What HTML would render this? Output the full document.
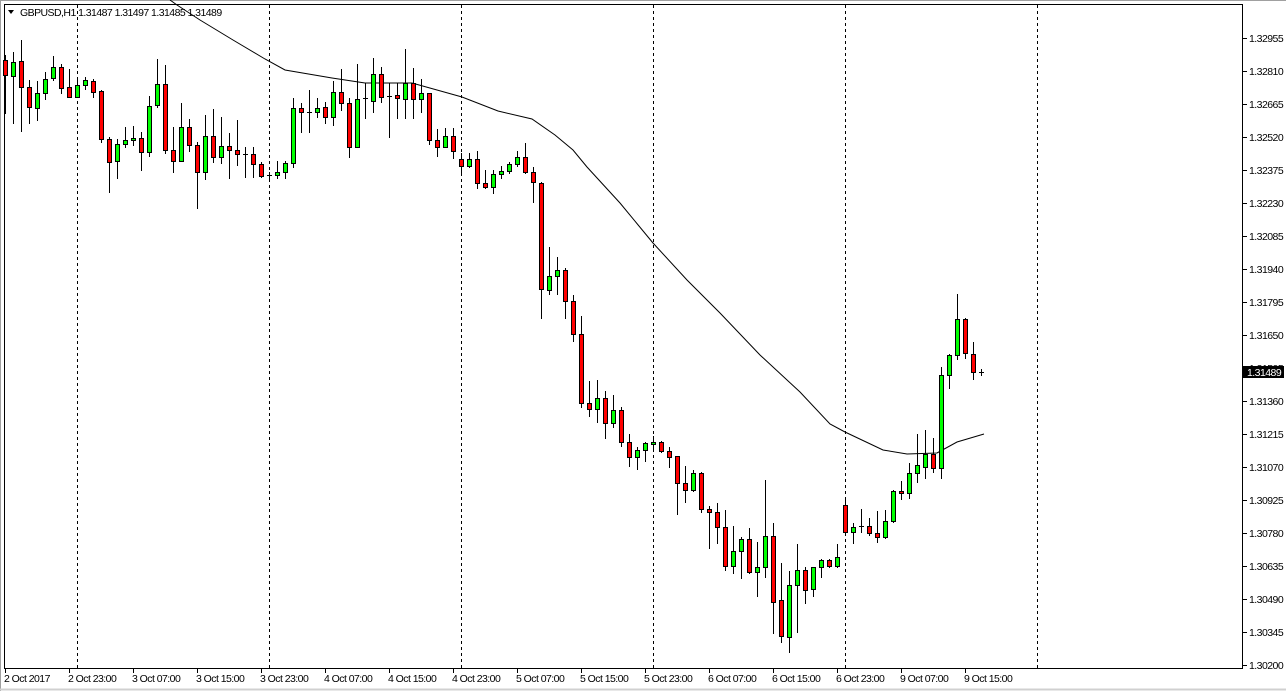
<!DOCTYPE html>
<html><head><meta charset="utf-8"><style>
html,body{margin:0;padding:0;background:#fff;width:1286px;height:691px;overflow:hidden}
svg{display:block}
text{font-family:"Liberation Sans",sans-serif;font-size:10.5px;letter-spacing:-0.55px;fill:#000}
</style></head><body>
<svg id="s" width="1286" height="691" xmlns="http://www.w3.org/2000/svg">
<rect x="0" y="0" width="1286" height="691" fill="#fff"/>
<line x1="0" y1="0.5" x2="1286" y2="0.5" stroke="#a0a0a0"/>
<line x1="0.5" y1="0" x2="0.5" y2="691" stroke="#a0a0a0"/>
<line x1="0" y1="689.5" x2="1286" y2="689.5" stroke="#d0d0d0" stroke-width="2"/>
<line x1="4.5" y1="4" x2="4.5" y2="669" stroke="#000"/>
<line x1="4" y1="4.5" x2="1243" y2="4.5" stroke="#000"/>
<line x1="1242.5" y1="4" x2="1242.5" y2="669" stroke="#000"/>
<line x1="4" y1="668.5" x2="1243" y2="668.5" stroke="#000"/>
<g id="dash"></g>
<g id="ma"></g>
<g id="c"></g>
<g id="ax"></g>
<polygon points="8,10 14,10 11,14" fill="#000"/>
<text x="20" y="16">GBPUSD,H1  1.31487 1.31497 1.31485 1.31489</text>
<rect x="1243" y="366" width="41" height="12" fill="#000"/>
<text x="1247" y="376" style="fill:#fff">1.31489</text>
</svg>
<script>
var NS="http://www.w3.org/2000/svg";
function el(p,n,a,t){var e=document.createElementNS(NS,n);for(var k in a)e.setAttribute(k,a[k]);if(t)e.textContent=t;document.getElementById(p).appendChild(e);return e;}
[77,269,461,653,845,1037].forEach(function(x){el("dash","line",{x1:x+.5,y1:5,x2:x+.5,y2:668,stroke:"#000","stroke-dasharray":"3,3"});});
var ma="M170,0 L177,5 L200,20 L233,40 L265,59 L285,70 L332,78 L365,83 L412,83 L462,97 L498,111 L532,119 L555,135 L573,150 L587,167 L620,203 L653,243 L687,280 L720,313 L760,355 L800,392 L830,424 L845,432 L883,450 L907,454 L937,453 L957,442 L984,434";
el("ma","path",{d:ma,fill:"none",stroke:"#000","stroke-width":1});
var D="60,75,55,113,r;62,76,52,123,g;61,87,40,131,r;87,107,80,123,r;93,108,81,120,g;79,93,72,99,g;67,78,56,80,g;67,88,64,93,r;87,97,69,97,r;85,97,77,97,g;80,85,77,89,g;81,92,79,97,r;91,139,90,142,r;139,162,137,192,r;144,161,139,178,g;140,144,127,147,g;138,140,126,145,g;138,152,132,170,r;106,152,96,156,g;84,105,59,107,g;84,150,65,153,r;150,161,127,172,r;127,161,103,161,g;127,145,119,151,r;145,172,142,208,r;136,172,115,179,g;136,157,109,162,r;146,157,117,163,g;146,150,133,178,r;150,154,120,165,r;154,154,147,177,d;154,164,147,177,r;164,176,162,177,r;175,175,172,178,d;172,175,161,178,g;163,172,161,178,g;108,163,98,167,g;108,112,103,132,r;112,112,90,132,d;108,112,98,117,g;107,117,102,123,r;92,117,81,125,g;92,103,69,110,r;103,147,98,157,r;99,147,64,147,g;98,102,83,118,d;74,101,58,112,g;74,97,67,102,r;96,96,83,137,d;95,98,83,118,r;83,99,49,118,g;83,99,68,118,r;93,99,79,112,g;93,140,93,144,r;140,147,129,156,r;136,147,128,147,g;136,151,128,158,r;159,166,153,174,r;159,166,153,167,g;159,183,151,188,r;183,187,170,188,r;174,187,170,193,g;171,174,166,178,g;164,171,162,173,g;157,164,151,166,g;157,172,143,173,r;172,182,167,202,r;183,289,182,318,r;276,290,247,294,g;270,276,257,294,g;270,301,268,318,r;301,334,295,341,r;334,403,316,407,r;403,409,381,416,r;398,409,380,422,g;398,423,391,438,r;410,423,395,427,g;410,442,407,446,r;442,457,434,466,r;450,457,447,469,g;443,450,442,461,g;442,444,436,449,g;442,451,441,452,r;451,457,447,467,r;456,483,456,514,r;483,490,466,502,r;473,490,470,491,g;473,509,472,512,r;509,512,506,548,r;512,527,503,543,r;527,566,510,570,r;551,566,526,573,g;539,551,537,578,g;539,572,528,573,r;567,572,542,596,g;536,567,480,577,g;536,602,523,633,r;600,636,563,642,r;585,637,571,652,g;570,585,544,632,g;570,590,567,603,r;567,589,567,596,g;560,567,559,577,g;560,566,559,567,r;557,566,544,567,g;505,532,497,534,r;527,532,523,543,g;526,526,509,532,d;526,533,518,535,r;533,537,511,542,r;521,537,510,538,g;491,521,490,522,g;491,493,481,499,r;473,493,463,498,g;465,473,434,482,g;454,467,430,478,g;454,468,438,472,r;375,468,367,478,g;355,375,354,388,g;319,355,294,359,g;319,353,318,358,r;354,372,342,379,r;372,372,369,375,d".split(";");
D.forEach(function(s,k){var a=s.split(","),t=+a[0],b=+a[1],h=+a[2],l=+a[3],c=a[4];var x=Math.round(5.3+8*k);
el("c","line",{x1:x+.5,y1:h,x2:x+.5,y2:l+1,stroke:"#000"});
if(c=="d"||b-t<2){el("c","line",{x1:x-2,y1:t+.5,x2:x+3,y2:t+.5,stroke:"#000"});}
else el("c","rect",{x:x-1.5,y:t+.5,width:4,height:b-t,fill:c=="g"?"#00ff00":"#ff0000",stroke:"#000"});});
var P=["1.32955","1.32810","1.32665","1.32520","1.32375","1.32230","1.32085","1.31940","1.31795","1.31650","1.31505","1.31360","1.31215","1.31070","1.30925","1.30780","1.30635","1.30490","1.30345","1.30200"];
P.forEach(function(p,i){var y=38+33*i;el("ax","line",{x1:1243,y1:y+.5,x2:1247,y2:y+.5,stroke:"#000"});el("ax","text",{x:1249,y:y+4},p);});
var L=["2 Oct 2017","2 Oct 23:00","3 Oct 07:00","3 Oct 15:00","3 Oct 23:00","4 Oct 07:00","4 Oct 15:00","4 Oct 23:00","5 Oct 07:00","5 Oct 15:00","5 Oct 23:00","6 Oct 07:00","6 Oct 15:00","6 Oct 23:00","9 Oct 07:00","9 Oct 15:00"];
L.forEach(function(t,i){var x=5+64*i;el("ax","line",{x1:x+.5,y1:669,x2:x+.5,y2:673,stroke:"#000"});el("ax","text",{x:x-1,y:682},t);});
</script>
</body></html>
